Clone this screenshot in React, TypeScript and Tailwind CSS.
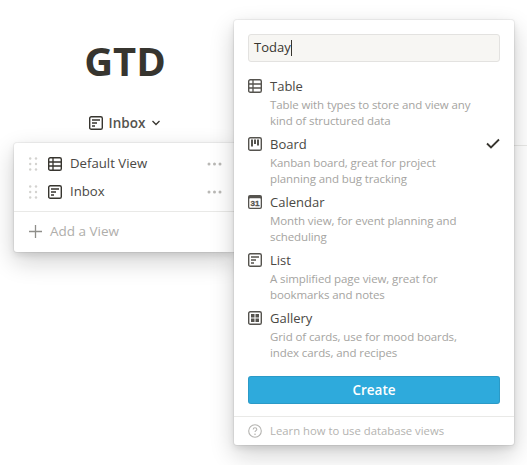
const font = "font-['Open_Sans','Noto_Sans',sans-serif]";

function ListIcon({ className = "" }: { className?: string }) {
  return (
    <svg viewBox="0 0 14 14" className={className} fill="none">
      <rect x="0.7" y="0.7" width="12.6" height="12.6" rx="1.6" stroke="currentColor" strokeWidth="1.4" />
      <path d="M3 4h8M3 7h5M3 10h3" stroke="currentColor" strokeWidth="1.4" />
    </svg>
  );
}

function TableIcon({ className = "" }: { className?: string }) {
  return (
    <svg viewBox="0 0 14 14" className={className} fill="none">
      <rect x="0.7" y="0.7" width="12.6" height="12.6" rx="1.6" stroke="currentColor" strokeWidth="1.4" />
      <path d="M1 5h12M1 9h12M5 1v12" stroke="currentColor" strokeWidth="1.3" />
    </svg>
  );
}

function BoardIcon({ className = "" }: { className?: string }) {
  return (
    <svg viewBox="0 0 14 14" className={className} fill="none">
      <rect x="0.7" y="0.7" width="12.6" height="12.6" rx="1.6" stroke="currentColor" strokeWidth="1.4" />
      <path d="M3 2.5h2v7H3zM6 2.5h2v4.5H6zM9 2.5h2v6H9z" fill="currentColor" />
    </svg>
  );
}

function CalendarIcon({ className = "" }: { className?: string }) {
  return (
    <svg viewBox="0 0 14 14" className={className} fill="none">
      <rect x="0" y="0" width="14" height="14" rx="2" fill="currentColor" />
      <rect x="1.3" y="3.2" width="11.4" height="9.5" rx="0.8" fill="#fff" />
      <text x="7" y="11" textAnchor="middle" fontSize="8" fontWeight="700" stroke="currentColor" strokeWidth="0.3" fontFamily="Liberation Sans, sans-serif" fill="currentColor">31</text>
    </svg>
  );
}

function GalleryIcon({ className = "" }: { className?: string }) {
  return (
    <svg viewBox="0 0 14 14" className={className} fill="none">
      <rect x="0.7" y="0.7" width="12.6" height="12.6" rx="1.6" stroke="currentColor" strokeWidth="1.4" />
      <path d="M3 3h3.5v3.5H3zM7.5 3H11v3.5H7.5zM3 7.5h3.5V11H3zM7.5 7.5H11V11H7.5z" fill="currentColor" />
    </svg>
  );
}

function DragDots() {
  return (
    <svg viewBox="0 0 9 14" className="w-[9px] h-[14px] text-[#d3d2cf]" fill="currentColor">
      <circle cx="1.2" cy="1.5" r="1.2" />
      <circle cx="7" cy="1.5" r="1.2" />
      <circle cx="1.2" cy="7" r="1.2" />
      <circle cx="7" cy="7" r="1.2" />
      <circle cx="1.2" cy="12.5" r="1.2" />
      <circle cx="7" cy="12.5" r="1.2" />
    </svg>
  );
}

function Dots() {
  return (
    <svg viewBox="0 0 15 4" className="w-[15px] h-[4px] text-[#b9b8b5]" fill="currentColor">
      <circle cx="2" cy="2" r="1.5" />
      <circle cx="7.5" cy="2" r="1.5" />
      <circle cx="13" cy="2" r="1.5" />
    </svg>
  );
}

const views = [
  { name: "Table", icon: TableIcon, lines: ["Table with types to store and view any", "kind of structured data"] },
  { name: "Board", icon: BoardIcon, lines: ["Kanban board, great for project", "planning and bug tracking"], checked: true },
  { name: "Calendar", icon: CalendarIcon, lines: ["Month view, for event planning and", "scheduling"] },
  { name: "List", icon: ListIcon, lines: ["A simplified page view, great for", "bookmarks and notes"] },
  { name: "Gallery", icon: GalleryIcon, lines: ["Grid of cards, use for mood boards,", "index cards, and recipes"] },
];

export default function App() {
  return (
    <div className={`relative w-[527px] h-[465px] overflow-hidden bg-white text-[#37352f] ${font}`}>
      {/* page behind the menus */}
      <div className="w-[250px] flex flex-col items-center">
        <h1 className="mt-[31px] h-[60px] leading-[60px] text-[40px] font-bold text-[#37352f]">GTD</h1>
        <div className="mt-[22px] flex items-center gap-[6px] text-[13.5px] font-semibold text-[#55534e]">
          <ListIcon className="w-[14px] h-[14px] text-[#37352f]" />
          <span>Inbox</span>
          <svg viewBox="0 0 10 6" className="w-[10px] h-[6px]" fill="none">
            <path d="M1.5 1l3.5 3.5L8.5 1" stroke="#37352f" strokeWidth="1.3" />
          </svg>
        </div>
      </div>
      <div className="absolute left-[234px] right-0 top-[145px] h-px bg-[#e9e9e7]" />

      {/* views menu */}
      <div className="absolute left-[14px] top-[143px] w-[220px] h-[109px] bg-white rounded-l-[3px] shadow-[0_0_0_1px_rgba(15,15,15,0.05),0_3px_6px_rgba(15,15,15,0.1),0_9px_24px_rgba(15,15,15,0.2)]">
        <div className="pt-[7px]">
          {[
            { name: "Default View", icon: TableIcon },
            { name: "Inbox", icon: ListIcon },
          ].map((v) => (
            <div key={v.name} className="flex items-center h-[28px] pl-[15px] pr-[12px]">
              <DragDots />
              <v.icon className="ml-[10px] w-[14px] h-[14px] text-[#37352f]" />
              <span className="ml-[8px] flex-1 text-[13.2px] text-[#4a4844]">{v.name}</span>
              <Dots />
            </div>
          ))}
        </div>
        <div className="mt-[5px] border-t border-[#e9e9e7] flex items-center h-[40px] pl-[15px] text-[13.5px] text-[#afaeab]">
          <svg viewBox="0 0 14 14" className="w-[13px] h-[13px] text-[#8f8e8a]" fill="none">
            <path d="M7 0v14M0 7h14" stroke="currentColor" strokeWidth="1.4" />
          </svg>
          <span className="ml-[8px]">Add a View</span>
        </div>
      </div>

      {/* new view popup */}
      <div className="absolute left-[234px] top-[20px] w-[280px] h-[425px] bg-white rounded-[3px] shadow-[0_0_0_1px_rgba(15,15,15,0.05),0_3px_6px_rgba(15,15,15,0.1),0_9px_24px_rgba(15,15,15,0.2)] flex flex-col">
        <div className="mx-[14px] mt-[14px] h-[28px] flex items-center px-[5px] bg-[#f7f6f3] border border-[#e3e2e0] rounded-[3px] text-[13px] text-[#37352f]">
          <span>Today</span>
          <span className="w-px h-[16px] bg-[#37352f]" />
        </div>
        <div className="mt-[14px] flex flex-col">
          {views.map((v) => (
            <div key={v.name} className="relative h-[58px] pl-[14px] flex">
              <v.icon className="mt-[3px] w-[14px] h-[14px] text-[#55534e]" />
              <div className="ml-[8px]">
                <div className="h-[21px] leading-[20px] text-[13px] text-[#4a4844]">{v.name}</div>
                <div className="text-[11.5px] tracking-[-0.1px] leading-[16px] text-[#a5a4a1]">
                  {v.lines.map((l) => (
                    <div key={l}>{l}</div>
                  ))}
                </div>
              </div>
              {v.checked && (
                <svg viewBox="0 0 14 11" className="absolute right-[14px] top-[4px] w-[14px] h-[11px]" fill="none">
                  <path d="M1 5.5l4 4 8-8" stroke="#37352f" strokeWidth="1.8" />
                </svg>
              )}
            </div>
          ))}
        </div>
        <button className="mx-[14px] mt-[10px] h-[28px] rounded-[3px] bg-[#2eaadc] shadow-[inset_0_0_0_1px_rgba(15,15,15,0.1)] text-white text-[13.5px] font-semibold">
          Create
        </button>
        <div className="mt-[12px] border-t border-[#e9e9e7] flex-1 flex items-center pl-[14px] text-[11.3px] text-[#b4b3b0]">
          <svg viewBox="0 0 14 14" className="w-[14px] h-[14px]" fill="none">
            <circle cx="7" cy="7" r="6.3" stroke="#b4b3b0" strokeWidth="1.1" />
            <path d="M5.2 5.4c0-1 .8-1.6 1.8-1.6s1.8.6 1.8 1.5c0 1.4-1.8 1.3-1.8 2.8" stroke="#b4b3b0" strokeWidth="1.1" />
            <circle cx="7" cy="10.2" r="0.8" fill="#b4b3b0" />
          </svg>
          <span className="ml-[8px]">Learn how to use database views</span>
        </div>
      </div>
    </div>
  );
}
